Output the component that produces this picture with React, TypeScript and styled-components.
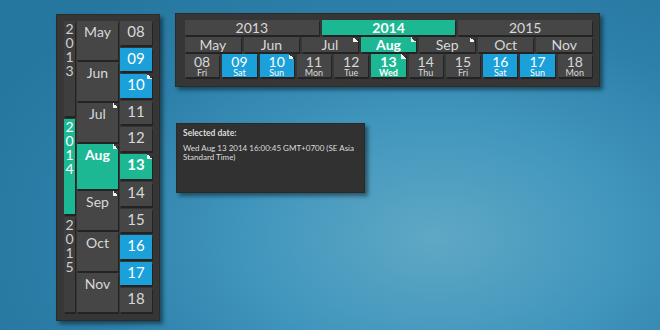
import React from "react";
import styled, { createGlobalStyle, css } from "styled-components";

type Tone = "plain" | "active" | "weekend";

const Global = createGlobalStyle`
  html, body {
    margin: 0;
    padding: 0;
  }
  body {
    width: 660px;
    height: 330px;
    overflow: hidden;
    font-family: Lato, "Open Sans", sans-serif;
    background: radial-gradient(ellipse 75% 95% at 66% 72%, #5fa8c5 0%, #4196bd 38%, #2d80aa 70%, #26779f 100%);
  }
`;

const Page = styled.div`
  display: flex;
  align-items: flex-start;
  gap: 15px;
  padding: 14px 0 0 56px;
`;

const toneCss = css<{ $tone: Tone }>`
  background: ${(p) =>
    p.$tone === "active" ? "#1cb894" : p.$tone === "weekend" ? "#1ba0da" : "#464646"};
  color: ${(p) => (p.$tone === "plain" ? "#d8d8d8" : "#ffffff")};
  font-weight: ${(p) => (p.$tone === "active" ? 700 : 400)};
`;

const Cell = styled.div<{ $tone: Tone; $mark?: boolean; $grow?: number }>`
  position: relative;
  box-shadow: 1px 2px 0 #232323;
  ${toneCss}
  ${(p) =>
    p.$mark &&
    css`
      &::after {
        content: "";
        position: absolute;
        top: 0;
        right: 0;
        width: 5px;
        height: 5px;
        background: linear-gradient(225deg, #383838 50%, #f2f2f2 50%);
      }
    `}
`;

/* ---------- vertical picker ---------- */

const VPanel = styled.div`
  display: flex;
  gap: 2px;
  width: 88px;
  height: 291px;
  padding: 6px 7px 8px 7px;
  background: #363636;
  border: 1px solid #2b2b2b;
  box-shadow: 3px 3px 4px rgba(0, 0, 0, 0.45);
`;

const VColumn = styled.div<{ $width: number; $gap: number }>`
  display: flex;
  flex-direction: column;
  gap: ${(p) => p.$gap}px;
  width: ${(p) => p.$width}px;
`;

const VYear = styled(Cell)`
  flex: 1;
  display: flex;
  flex-direction: column;
  align-items: center;
  padding-top: 1px;
  font-size: 14px;
  line-height: 14px;
  font-weight: 400;
  ${(p) => p.$tone === "plain" && css`background: #3e3e3e; color: #d0d0d0;`}
`;

const VMonth = styled(Cell)`
  flex: ${(p) => p.$grow ?? 1};
  text-align: center;
  font-size: 14px;
  line-height: 14px;
  padding-top: 4px;
`;

const VDay = styled(Cell)`
  flex: ${(p) => p.$grow ?? 1};
  text-align: center;
  font-size: 15px;
  line-height: 15px;
  padding-top: 3px;
`;

/* ---------- horizontal picker ---------- */

const HPanel = styled.div`
  display: flex;
  flex-direction: column;
  gap: 2px;
  width: 407px;
  padding: 6px 7px 9px 9px;
  background: #363636;
  border: 1px solid #2b2b2b;
  box-shadow: 3px 3px 4px rgba(0, 0, 0, 0.45);
`;

const HRow = styled.div<{ $height: number }>`
  display: flex;
  gap: 3px;
  height: ${(p) => p.$height}px;
`;

const HYear = styled(Cell)`
  flex: 1;
  text-align: center;
  font-size: 14px;
  line-height: 15px;
`;

const HMonth = styled(Cell)`
  flex: 1;
  text-align: center;
  font-size: 14px;
  line-height: 15px;
`;

const HDay = styled(Cell)`
  flex: 1;
  display: flex;
  flex-direction: column;
  align-items: center;
  padding-top: 2px;
`;

const DayNum = styled.span`
  font-size: 14px;
  line-height: 12px;
`;

const DayName = styled.span`
  font-size: 9px;
  line-height: 9px;
`;

/* ---------- selected date box ---------- */

const RightSide = styled.div`
  display: flex;
  flex-direction: column;
  align-items: flex-start;
  margin-top: -1px;
`;

const InfoBox = styled.div`
  margin: 36px 0 0 1px;
  width: 174px;
  height: 58px;
  padding: 5px 7px 5px 6px;
  background: #313131;
  border: 1px solid #292929;
  box-shadow: 3px 3px 4px rgba(0, 0, 0, 0.45);
  color: #dcdcdc;
  font-size: 8px;
  line-height: 9px;
`;

const InfoTitle = styled.div`
  font-weight: 700;
  font-size: 8.5px;
  margin-bottom: 6px;
`;

const years = [
  { label: "2013", tone: "plain" as Tone },
  { label: "2014", tone: "active" as Tone },
  { label: "2015", tone: "plain" as Tone },
];

const months = [
  { label: "May" },
  { label: "Jun" },
  { label: "Jul", mark: true },
  { label: "Aug", mark: true, active: true },
  { label: "Sep", mark: true },
  { label: "Oct" },
  { label: "Nov" },
];

const days = [
  { n: "08", d: "Fri" },
  { n: "09", d: "Sat", weekend: true },
  { n: "10", d: "Sun", weekend: true, mark: true },
  { n: "11", d: "Mon" },
  { n: "12", d: "Tue" },
  { n: "13", d: "Wed", active: true, mark: true },
  { n: "14", d: "Thu" },
  { n: "15", d: "Fri" },
  { n: "16", d: "Sat", weekend: true },
  { n: "17", d: "Sun", weekend: true },
  { n: "18", d: "Mon" },
];

const dayTone = (x: { weekend?: boolean; active?: boolean }): Tone =>
  x.active ? "active" : x.weekend ? "weekend" : "plain";

export default function App() {
  return (
    <>
      <Global />
      <Page>
        <VPanel>
          <VColumn $width={11} $gap={3}>
            {years.map((y) => (
              <VYear key={y.label} $tone={y.tone}>
                {y.label.split("").map((c, i) => (
                  <span key={i}>{c}</span>
                ))}
              </VYear>
            ))}
          </VColumn>
          <VColumn $width={41} $gap={2}>
            {months.map((m) => (
              <VMonth
                key={m.label}
                $tone={m.active ? "active" : "plain"}
                $mark={m.mark}
                $grow={m.active ? 1.2 : 1}
              >
                {m.label}
              </VMonth>
            ))}
          </VColumn>
          <VColumn $width={32} $gap={3}>
            {days.map((d) => (
              <VDay key={d.n} $tone={dayTone(d)} $mark={d.mark} $grow={d.active ? 1.12 : 1}>
                {d.n}
              </VDay>
            ))}
          </VColumn>
        </VPanel>

        <RightSide>
          <HPanel>
            <HRow $height={15}>
              {years.map((y) => (
                <HYear key={y.label} $tone={y.tone}>
                  {y.label}
                </HYear>
              ))}
            </HRow>
            <HRow $height={15}>
              {months.map((m) => (
                <HMonth key={m.label} $tone={m.active ? "active" : "plain"} $mark={m.mark}>
                  {m.label}
                </HMonth>
              ))}
            </HRow>
            <HRow $height={23}>
              {days.map((d) => (
                <HDay key={d.n} $tone={dayTone(d)} $mark={d.mark}>
                  <DayNum>{d.n}</DayNum>
                  <DayName>{d.d}</DayName>
                </HDay>
              ))}
            </HRow>
          </HPanel>

          <InfoBox>
            <InfoTitle>Selected date:</InfoTitle>
            Wed Aug 13 2014 16:00:45 GMT+0700 (SE Asia Standard Time)
          </InfoBox>
        </RightSide>
      </Page>
    </>
  );
}
